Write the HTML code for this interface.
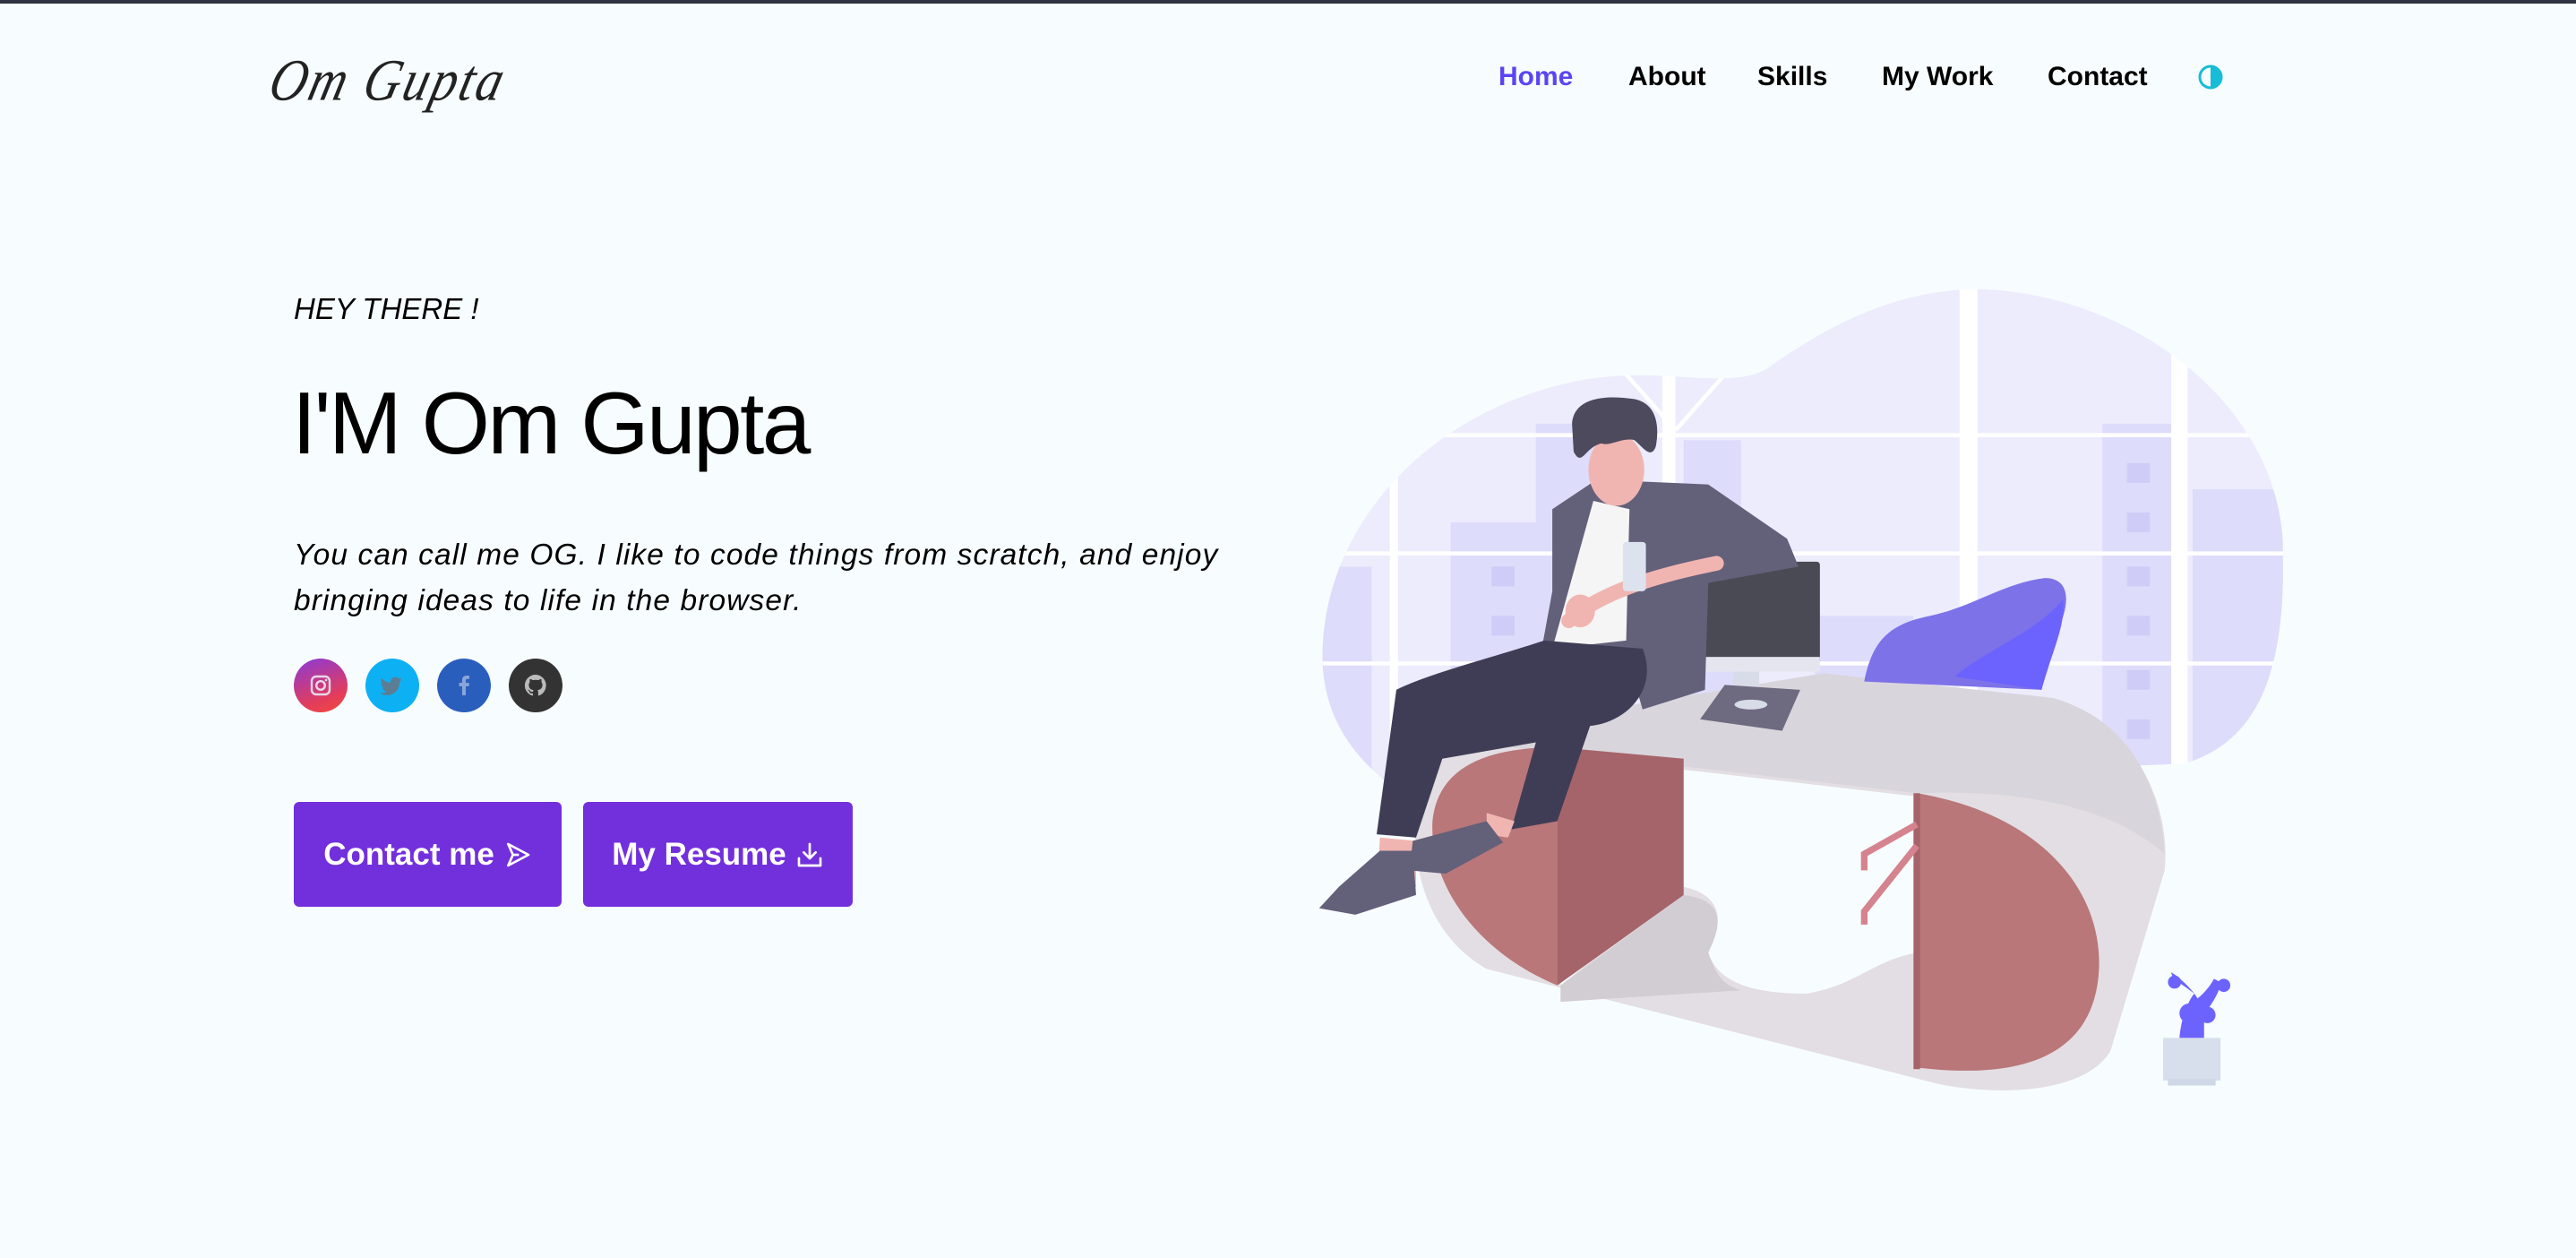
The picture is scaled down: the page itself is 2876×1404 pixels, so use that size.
<!DOCTYPE html>
<html><head><meta charset="utf-8">
<style>
html,body{margin:0;padding:0}
body{width:2876px;height:1404px;background:#f7fdfe;position:relative;overflow:hidden;font-family:"Liberation Sans",sans-serif;color:#000}
.topbar{position:absolute;left:0;top:0;width:2876px;height:4px;background:#2f3342}
.logo{position:absolute;left:312px;top:52px;font-family:"Liberation Serif",serif;font-style:italic;font-size:60px;font-weight:normal;letter-spacing:3px;transform:skewX(-14deg) scaleX(0.95) scaleY(1.1);transform-origin:left top;color:#222}
.nav{position:absolute;top:68px;font-size:30px;font-weight:bold;line-height:36px}
.hey{position:absolute;left:328px;top:326px;font-size:33px;font-style:italic;letter-spacing:0}
h1{position:absolute;left:326px;top:412px;margin:0;font-size:98px;font-weight:normal;letter-spacing:-2.5px;line-height:120px}
.p{position:absolute;left:328px;top:594px;font-size:33.5px;font-style:italic;line-height:51px;letter-spacing:1.1px;width:1250px}
.soc{position:absolute;top:735px;width:60px;height:60px;border-radius:50%}
.btn{position:absolute;top:895px;height:117px;background:#7230dc;border-radius:6px;color:#fff;font-weight:bold;font-size:35px;display:flex;align-items:center;justify-content:center;gap:10px}
</style></head><body>
<div class="topbar"></div>
<div class="logo">Om Gupta</div>
<div class="nav" style="left:1673px;color:#5b45f2">Home</div>
<div class="nav" style="left:1818px">About</div>
<div class="nav" style="left:1962px">Skills</div>
<div class="nav" style="left:2101px">My Work</div>
<div class="nav" style="left:2286px">Contact</div>
<svg style="position:absolute;left:2453px;top:71px" width="30" height="30" viewBox="0 0 30 30"><circle cx="15" cy="15" r="12" fill="none" stroke="#17bcd6" stroke-width="3"/><path d="M15 3 A12 12 0 0 1 15 27 Z" fill="#17bcd6"/></svg>

<div class="hey">HEY THERE !</div>
<h1>I'M Om Gupta</h1>
<div class="p">You can call me OG. I like to code things from scratch, and enjoy<br>bringing ideas to life in the browser.</div>

<div class="soc" style="left:328px;background:linear-gradient(160deg,#8a3ad8,#e23c5c 70%,#f34a3a)"><svg width="60" height="60" viewBox="0 0 60 60"><rect x="20" y="20" width="20" height="20" rx="5" fill="none" stroke="#e9d7e8" stroke-width="2.4"/><circle cx="30" cy="30" r="4.8" fill="none" stroke="#e9d7e8" stroke-width="2.4"/><circle cx="36" cy="24" r="1.3" fill="#e9d7e8"/></svg></div>
<div class="soc" style="left:408px;background:#0eb0f4"><svg width="60" height="60" viewBox="0 0 60 60"><path d="M41 23c-1 .5-2 .7-3 .8 1-.6 1.8-1.6 2.2-2.7-1 .6-2.1 1-3.2 1.2a5 5 0 0 0-8.6 4.6c-4.2-.2-7.9-2.2-10.4-5.2-1.4 2.4-.6 5.3 1.6 6.8-.8 0-1.6-.3-2.3-.6 0 2.5 1.7 4.5 4 5-.7.2-1.5.2-2.3.1.6 2 2.5 3.5 4.7 3.5-2.1 1.6-4.8 2.4-7.5 2.1 2.3 1.5 5 2.3 7.7 2.3 9.3 0 14.5-7.9 14.2-15 1-.7 1.8-1.6 2.5-2.6z" fill="#5c7d93"/></svg></div>
<div class="soc" style="left:488px;background:#2a5ebd"><svg width="60" height="60" viewBox="0 0 60 60"><path d="M32 41V31h3.4l.5-3.9H32v-2.5c0-1.1.3-1.9 1.9-1.9h2.1v-3.5c-.4 0-1.6-.2-3-.2-3 0-5 1.8-5 5.1v2.9h-3.4V31h3.4v10z" fill="#8aa5d8"/></svg></div>
<div class="soc" style="left:568px;background:#333"><svg width="60" height="60" viewBox="0 0 60 60"><path d="M30 18a12 12 0 0 0-3.8 23.4c.6.1.8-.3.8-.6v-2.1c-3.3.7-4-1.6-4-1.6-.5-1.4-1.3-1.8-1.3-1.8-1.1-.7.1-.7.1-.7 1.2.1 1.8 1.2 1.8 1.2 1.1 1.8 2.8 1.3 3.5 1 .1-.8.4-1.3.8-1.6-2.7-.3-5.5-1.3-5.5-5.9 0-1.3.5-2.4 1.2-3.2-.1-.3-.5-1.5.1-3.2 0 0 1-.3 3.3 1.2a11.4 11.4 0 0 1 6 0c2.3-1.5 3.3-1.2 3.3-1.2.7 1.7.2 2.9.1 3.2.8.8 1.2 1.9 1.2 3.2 0 4.6-2.8 5.6-5.5 5.9.4.4.8 1.1.8 2.2v3.3c0 .3.2.7.8.6A12 12 0 0 0 30 18z" fill="#bbb"/></svg></div>

<div class="btn" style="left:328px;width:299px">Contact me <svg width="32" height="32" viewBox="0 0 24 24" fill="none" stroke="#fff" stroke-width="2" stroke-linejoin="round"><path d="M4 3l17 9-17 9 4-9z"/><path d="M8 12h5"/></svg></div>
<div class="btn" style="left:651px;width:301px">My Resume <svg width="32" height="32" viewBox="0 0 24 24" fill="none" stroke="#fff" stroke-width="2" stroke-linecap="round" stroke-linejoin="round"><path d="M12 3v12M7 10l5 5 5-5M3 15v6h18v-6"/></svg></div>

<svg style="position:absolute;left:0;top:0" width="2876" height="1404" viewBox="0 0 1568 766">
<defs><clipPath id="blob"><path d="M805 400C805 320 870 250 960 232C1010 222 1050 238 1075 225C1110 200 1150 178 1200 176C1290 176 1385 240 1390 330C1392 400 1380 450 1330 465L1200 470C1150 500 1080 520 1000 520C900 520 805 480 805 400Z"/></clipPath></defs>
<g clip-path="url(#blob)">
<rect x="800" y="170" width="600" height="360" fill="#ececfd"/>
<g fill="#dedcfb">
<rect x="883" y="318" width="55" height="210"/><rect x="935" y="258" width="45" height="270"/><rect x="1025" y="268" width="35" height="260"/><rect x="805" y="345" width="30" height="180"/><rect x="1105" y="375" width="60" height="150"/><rect x="1280" y="258" width="42" height="210"/><rect x="1335" y="298" width="55" height="170"/>
</g>
<g fill="#cfcdf7"><rect x="908" y="345" width="14" height="12"/><rect x="908" y="375" width="14" height="12"/><rect x="1295" y="282" width="14" height="12"/><rect x="1295" y="312" width="14" height="12"/><rect x="1295" y="345" width="14" height="12"/><rect x="1295" y="375" width="14" height="12"/><rect x="1295" y="408" width="14" height="12"/><rect x="1295" y="438" width="14" height="12"/></g>
<g stroke="#fff" stroke-width="2.5"><line x1="800" y1="265" x2="1400" y2="265"/><line x1="800" y1="337" x2="1400" y2="337"/><line x1="800" y1="404" x2="1400" y2="404"/><line x1="990" y1="228" x2="1020" y2="262"/><line x1="1050" y1="228" x2="1020" y2="262"/></g>
<rect x="846" y="170" width="5" height="360" fill="#fff"/><rect x="1193" y="170" width="11" height="360" fill="#fff"/><rect x="1322" y="170" width="10" height="360" fill="#fff"/><rect x="1012" y="220" width="8" height="80" fill="#fff"/>
</g>
<path d="M868 450L1110 410L1250 425C1300 440 1322 490 1318 530L1285 640C1270 665 1220 668 1180 660L905 590C870 570 858 530 862 490Z" fill="#e3dee3"/>
<path d="M868 450L1110 410L1250 425C1295 438 1315 475 1318 520C1290 495 1240 480 1167 483L950 458Z" fill="#d9d5dc"/>
<path d="M950 460L1167 485L1167 580C1140 585 1130 600 1100 605C1060 605 1045 595 1040 580C1050 560 1048 545 1025 540L950 600Z" fill="#f7fdfe"/>
<path d="M950 600L1025 545C1048 548 1050 560 1040 580C1045 595 1050 600 1060 603L950 610Z" fill="#d2cdd3"/>
<path d="M948 455L948 600C900 580 870 540 872 500C875 470 900 455 948 455Z" fill="#b97779"/>
<path d="M948 455L1025 462L1025 545L948 600Z" fill="#a5646a"/>
<path d="M1167 483C1240 495 1280 540 1278 590C1276 630 1250 660 1167 650Z" fill="#b97779"/>
<rect x="1165" y="483" width="4" height="168" fill="#a5646a"/>
<g stroke="#d4838f" stroke-width="4" fill="none"><path d="M1167 502L1135 520L1135 530"/><path d="M1167 515L1135 555L1135 563"/></g>
<path d="M1135 415C1140 390 1150 380 1175 375C1200 370 1220 355 1245 352C1262 352 1260 370 1252 385L1243 420Z" fill="#7d72e8"/>
<path d="M1190 412C1210 395 1240 385 1256 365C1258 380 1250 395 1243 420Z" fill="#6c63ff"/>
<rect x="1035" y="342" width="73" height="62" rx="2" fill="#4a4a54"/>
<rect x="1035" y="400" width="73" height="9" fill="#e4e5ef"/>
<rect x="1055" y="409" width="16" height="12" fill="#d8dbe8"/>
<path d="M1035 438L1050 417L1096 420L1085 445Z" fill="#6e6a80"/>
<ellipse cx="1066" cy="429" rx="10" ry="3" fill="#d8dbe8"/>
<path d="M945 310L972 292L1040 295L1088 328L1095 345L1040 355L1038 420L1000 432L990 398L938 398L945 360Z" fill="#63607a"/>
<path d="M970 305L992 310L990 390L945 395Z" fill="#f5f5f5"/>
<path d="M940 390L1000 395C1010 420 990 440 968 442L948 500L920 505L935 452L878 462L862 510L838 508L850 420C870 410 910 400 940 390Z" fill="#3f3d56"/>
<path d="M840 510L862 512L862 540L838 545Z" fill="#f1b5b1"/>
<path d="M905 495L922 500L918 510L905 508Z" fill="#f1b5b1"/>
<path d="M840 518L860 518L862 545L825 557L803 553L815 540Z" fill="#63607a"/>
<path d="M860 512L905 500L915 513L880 532L858 530Z" fill="#63607a"/>
<path d="M955 378C975 360 1010 350 1045 343" stroke="#f1b5b1" stroke-width="9" fill="none" stroke-linecap="round"/>
<ellipse cx="962" cy="372" rx="9" ry="10" fill="#f1b5b1"/>
<rect x="988" y="330" width="14" height="30" rx="2" fill="#dde3ee"/>
<ellipse cx="984" cy="286" rx="17" ry="22" fill="#f1b5b1"/>
<path d="M957 258C958 243 975 240 995 243C1010 246 1010 262 1008 272C1005 280 1000 272 995 268C988 266 980 272 975 270C965 272 963 285 958 275Z" fill="#4e4a5e"/>
<path d="M1327 632C1328 620 1332 610 1336 605C1330 600 1322 596 1322 592L1325 594C1330 598 1336 604 1338 608C1342 605 1346 600 1348 596L1352 598C1352 604 1346 612 1342 618L1342 632Z" fill="#6c63ff"/>
<circle cx="1324" cy="598" r="4" fill="#6c63ff"/><circle cx="1354" cy="600" r="4" fill="#6c63ff"/><circle cx="1333" cy="617" r="6" fill="#6c63ff"/><circle cx="1344" cy="618" r="5" fill="#6c63ff"/>
<rect x="1317" y="632" width="35" height="26" fill="#d6dfeb"/>
<rect x="1320" y="657" width="29" height="4" fill="#cfd8e6"/>
</svg>
</body></html>
